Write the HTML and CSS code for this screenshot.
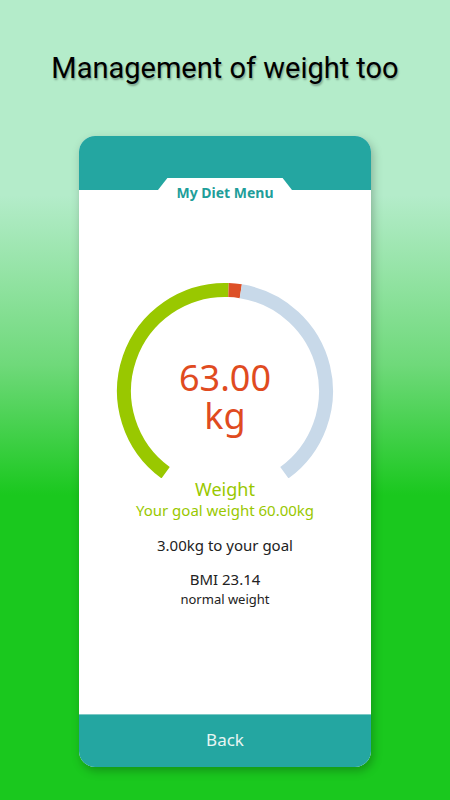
FILE: index.html
```html
<!DOCTYPE html>
<html lang="en">
<head>
    <meta charset="UTF-8">
    <meta name="viewport" content="width=device-width, initial-scale=1.0">
    <title>My Diet Menu</title>
    <link rel="stylesheet" href="styles.css">
</head>
<body>
    <h1 class="headline">Management of weight too</h1>

    <div class="card">
        <div class="card-top">
            <div class="tab"></div>
        </div>

        <div class="card-body">
            <div class="card-title">My Diet Menu</div>

            <div class="gauge">
                <svg class="gauge-svg" width="230" height="202" viewBox="0 0 230 202">
                    <!-- green: start to current, red: marker, blue: rest -->
                    <path d="M55.63 196.71 A101 101 0 0 1 118.52 14.06" class="arc-done"/>
                    <path d="M118.52 14.06 A101 101 0 0 1 130.80 15.24" class="arc-mark"/>
                    <path d="M130.80 15.24 A101 101 0 0 1 174.37 196.71" class="arc-rest"/>
                </svg>
                <div class="gauge-value">63.00<br>kg</div>
            </div>

            <div class="label-weight">Weight</div>
            <div class="label-goal">Your goal weight 60.00kg</div>
            <div class="info-left">3.00kg to your goal</div>
            <div class="info-bmi">BMI 23.14</div>
            <div class="info-state">normal weight</div>
        </div>

        <div class="card-bottom">Back</div>
    </div>
</body>
</html>
```

FILE: styles.css
```css
*{
    box-sizing: border-box;
    padding: 0;
    margin: 0;
}

body{
    width: 450px;
    height: 800px;
    overflow: hidden;
    font-family: "Noto Sans", sans-serif;
    background: linear-gradient(to bottom, #b4ecca 0px, #b4ecca 195px, #6fd97a 365px, #1ac81e 495px, #1ac81e 800px);
}

.headline{
    font-family: Roboto, sans-serif;
    font-weight: 400;
    font-size: 29px;
    line-height: 34px;
    text-align: center;
    color: #000;
    padding-top: 51px;
    text-shadow: 1px 2px 2px rgba(0, 0, 0, 0.3);
}

.card{
    width: 292px;
    height: 631px;
    margin: 51px auto 0;
    border-radius: 16px;
    overflow: hidden;
    background: #fff;
    display: flex;
    flex-direction: column;
    box-shadow: 2px 4px 10px rgba(0, 0, 0, 0.25);
}

.card-top{
    height: 54px;
    background: #24a6a1;
    display: flex;
    justify-content: center;
    align-items: flex-end;
}

.tab{
    width: 134px;
    height: 12px;
    background: #fff;
    clip-path: polygon(0 100%, 7% 0, 93% 0, 100% 100%);
}

.card-body{
    flex: 1;
    display: flex;
    flex-direction: column;
    align-items: center;
    text-align: center;
}

.card-title{
    position: relative;
    z-index: 1;
    margin-top: -6px;
    font-size: 14px;
    line-height: 18px;
    font-weight: 700;
    color: #1f9e9a;
}

.gauge{
    position: relative;
    width: 230px;
    height: 202px;
    margin-top: 74px;
}

.gauge-svg{
    display: block;
}

.gauge-svg path{
    fill: none;
    stroke-width: 14;
}

.arc-done{
    stroke: #99c800;
}

.arc-mark{
    stroke: #dd5027;
}

.arc-rest{
    stroke: #c8d9e9;
}

.gauge-value{
    position: absolute;
    left: 0;
    right: 0;
    top: 83px;
    font-size: 36px;
    line-height: 38px;
    color: #e04b1f;
}

.label-weight{
    font-size: 18px;
    line-height: 22px;
    color: #99c800;
}

.label-goal{
    font-size: 15px;
    line-height: 20px;
    color: #99c800;
}

.info-left{
    margin-top: 15px;
    font-size: 15px;
    line-height: 20px;
    color: #222;
}

.info-bmi{
    margin-top: 14px;
    font-size: 15px;
    line-height: 20px;
    color: #222;
}

.info-state{
    font-size: 13px;
    line-height: 20px;
    color: #222;
}

.card-bottom{
    height: 53px;
    padding-bottom: 3px;
    background: #24a6a1;
    border-top: 1px solid #7cc9c5;
    color: #e8f5f3;
    font-size: 17px;
    display: flex;
    align-items: center;
    justify-content: center;
}
```
